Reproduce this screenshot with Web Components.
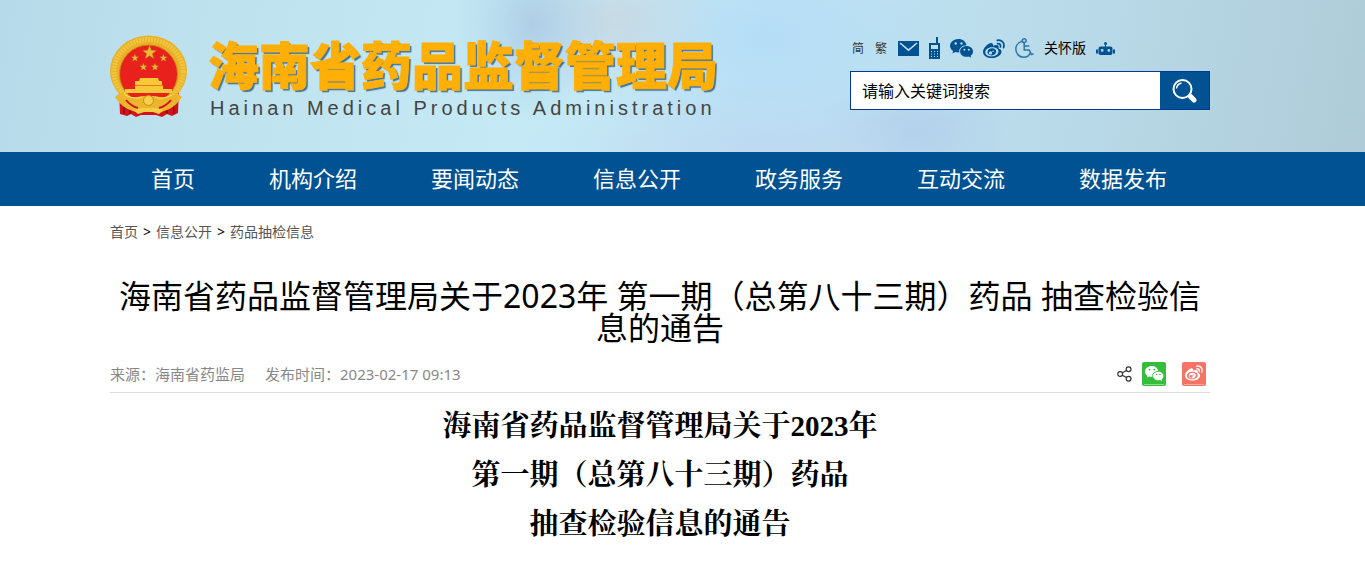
<!DOCTYPE html>
<html lang="zh-CN">
<head>
<meta charset="utf-8">
<meta name="viewport" content="width=device-width, initial-scale=1">
<title>海南省药品监督管理局</title>
<style>
  body {
    margin: 0;
    background: #fff;
    color: #000;
    font-family: "Noto Sans", "Noto Sans CJK SC", sans-serif;
    font-size: 14px;
    --blue: #005293;
    --left: 110px;
    --right: 155px;
  }
</style>
</head>
<body>
<hmpa-header>
  <hmpa-brand slot="brand" en="Hainan Medical Products Administration">海南省药品监督管理局</hmpa-brand>
  <hmpa-tools slot="tools"></hmpa-tools>
  <hmpa-search slot="tools" hint="请输入关键词搜索"></hmpa-search>
</hmpa-header>
<hmpa-nav items="首页,机构介绍,要闻动态,信息公开,政务服务,互动交流,数据发布"></hmpa-nav>
<hmpa-crumbs items="首页,信息公开,药品抽检信息"></hmpa-crumbs>
<hmpa-article>
  <span slot="title">海南省药品监督管理局关于2023年 第一期（总第八十三期）药品 抽查检验信息的通告</span>
  <span slot="source">来源：海南省药监局</span>
  <span slot="date">发布时间：2023-02-17 09:13</span>
  <hmpa-share slot="share"></hmpa-share>
  <div>海南省药品监督管理局关于2023年</div>
  <div>第一期（总第八十三期）药品</div>
  <div>抽查检验信息的通告</div>
</hmpa-article>

<script>
// two chat bubbles with the eyes left out
const WECHAT = `
  <path fill-rule="evenodd" d="M8.6 0C3.8 0 0 3 0 6.800c0 2.200 1.200 4 3.200 5.300L2.400 14.500l3-1.500c1 .3 2 .5 3.200.5h.7c-.8-4 2.600-7.300 7.200-7.300C15.900 2.600 12.600 0 8.600 0zM5.700 3.300a1.200 1.200 0 1 1 0 2.400 1.200 1.200 0 0 1 0-2.400zm5.800 0a1.200 1.200 0 1 1 0 2.400 1.200 1.200 0 0 1 0-2.400z"/>
  <path fill-rule="evenodd" d="M16.600 7.100c-3.700 0-6.500 2.400-6.500 5.300s2.800 5.300 6.500 5.300c.8 0 1.500-.1 2.200-.3l2.400 1.300-.6-2c1.500-1 2.400-2.600 2.400-4.300 0-2.900-2.800-5.300-6.400-5.300zM14.400 9.700a1 1 0 1 1 0 2 1 1 0 0 1 0-2zm4.400 0a1 1 0 1 1 0 2 1 1 0 0 1 0-2z"/>`;

const WEIBO = `
  <path fill-rule="evenodd" d="M8.900 4.200C6.500 3 0 8.600 0 12.900 0 16.600 4.200 19 8.800 19c5.700 0 9.700-3.200 9.700-6.300 0-1.800-1.400-2.900-3-3.300.7-2-.1-3.500-2.300-3.300-1 .1-2.100.4-3.100.9.300-1.300 0-2.300-1.200-2.800zM9 8.200c4 0 6.500 1.800 6.500 4.400S12.600 17.400 8.700 17.400s-6.400-1.700-6.400-4.200S5 8.200 9 8.200z"/>
  <path fill-rule="evenodd" d="M9.200 9.300c-2.700 0-4.700 1.700-4.700 3.800s1.700 3.300 4 3.300c2.800 0 4.700-1.800 4.700-3.800s-1.600-3.300-4-3.300zM7.500 12.200a1.700 1.700 0 1 1 0 3.400 1.700 1.700 0 0 1 0-3.400zm2.600-.8a.8.8 0 1 1 0 1.600.8.8 0 0 1 0-1.600z"/>
  <path fill="none" stroke="currentColor" stroke-width="1.700" stroke-linecap="round" d="M14.500 4.700c2.300-.3 3.500 1.100 2.900 3.200M14.300 1.300c4.700-.7 7.700 2.900 6.300 7.400"/>`;

const ICONS = {
  mail: [21, 15, `
    <path d="M0 0h21v15H0z"/>
    <path fill="none" stroke="#c3dfee" stroke-width="1.600" d="M2 2l8.500 7.200L19 2"/>`],
  phone: [11, 22, `
    <path fill-rule="evenodd" d="M7 0h2v6h2v16H0V6h7zM2 8v4h7V8zM2 14v1h1v-1zm3 0v1h1v-1zm3 0v1h1v-1zM2 16.500v1h1v-1zm3 0v1h1v-1zm3 0v1h1v-1zM2 19v1h1v-1zm3 0v1h1v-1zm3 0v1h1v-1z"/>`],
  wechat: [23, 19, WECHAT],
  weibo: [22, 19, WEIBO],
  wheelchair: [19, 20, `
    <g fill="none" stroke="currentColor" stroke-width="1.500" opacity=".75">
      <circle cx="9.200" cy="2.700" r="1.900"/>
      <path d="M9.200 4.800v7.200h5l2.300 4.600 2-.9M9.500 8h4.800"/>
      <path d="M7 3.300C2.500 4.600.8 8.400.8 11c0 4.700 3.500 8.200 7.700 8.200 3.300 0 6-1.700 7-4.800"/>
    </g>`],
  robot: [19, 13, `
    <circle cx="9.500" cy="1.500" r="1.500"/>
    <path d="M9 2h1v3H9zM0 7.500h2v4H0zM17 7.500h2v4h-2z"/>
    <path fill-rule="evenodd" d="M4.500 4.500h10a2 2 0 0 1 2 2v4.500a2 2 0 0 1-2 2h-10a2 2 0 0 1-2-2V6.500a2 2 0 0 1 2-2zM6.200 7a1.400 1.400 0 1 0 0 2.800 1.400 1.400 0 0 0 0-2.800zm6.600 0a1.400 1.400 0 1 0 0 2.800 1.400 1.400 0 0 0 0-2.800z"/>`],
  search: [26, 24, `
    <g fill="none" stroke="currentColor">
      <circle cx="10.500" cy="10" r="9" stroke-width="2"/>
      <path stroke-width="1.500" d="M4.500 9.500c.3-3 2.200-5 5-5.600"/>
      <path stroke-width="5" stroke-linecap="round" d="M18.500 17.500l3.500 3.500"/>
    </g>`],
  share: [15, 16, `
    <g fill="none" stroke="currentColor" stroke-width="1.200">
      <circle cx="3.200" cy="8" r="2.400"/><circle cx="11.600" cy="3.200" r="2.400"/><circle cx="11.600" cy="12.800" r="2.400"/>
      <path d="M5.300 6.800l4.200-2.400M5.300 9.200l4.200 2.400"/>
    </g>`],
  'wechat-tile': [24, 24, `
    <rect width="24" height="24" rx="2" fill="#36bd3c"/>
    <g fill="#fff" transform="translate(3 4) scale(.8)">${WECHAT}</g>
    <path d="M2 22h20v1H2z" fill="#8ddc90"/>`],
  'weibo-tile': [24, 24, `
    <rect width="24" height="24" rx="2" fill="#f57367"/>
    <g fill="#fff" color="#fff" transform="translate(3 3) scale(.82)">${WEIBO}</g>
    <path d="M2 22h20v1H2z" fill="#f9aaa2"/>`]
};

class HmpaIcon extends HTMLElement {
  constructor() {
    super();
    this.attachShadow({mode: 'open'});
  }
  connectedCallback() {
    const [w, h, body] = ICONS[this.getAttribute('name')];
    this.shadowRoot.innerHTML = `
      <style>
        :host { display: block; flex: none; }
        svg { display: block; }
      </style>
      <svg width="${w}" height="${h}" viewBox="0 0 ${w} ${h}" fill="currentColor" aria-hidden="true">${body}</svg>
    `;
  }
}

class HmpaHeader extends HTMLElement {
  constructor() {
    super();
    this.attachShadow({mode: 'open'}).innerHTML = `
      <style>
        :host {
          display: flex;
          justify-content: space-between;
          align-items: flex-start;
          box-sizing: border-box;
          min-height: 152px;
          padding: 35px var(--right) 32px var(--left);
          background:
            radial-gradient(ellipse 80px 100px at 39% 16%, rgba(165, 196, 226, .7), rgba(165, 196, 226, .3) 50%, rgba(165, 196, 226, 0)),
            radial-gradient(ellipse 110px 80px at 45% 14%, rgba(200, 214, 224, .8), rgba(200, 214, 224, .3) 60%, rgba(200, 214, 224, 0)),
            radial-gradient(ellipse 180px 130px at 56% 25%, rgba(178, 219, 247, .8), rgba(178, 219, 247, .3) 60%, rgba(178, 219, 247, 0)),
            radial-gradient(ellipse 260px 80px at 56% 100%, rgba(190, 214, 240, .8), rgba(190, 214, 240, .3) 60%, rgba(190, 214, 240, 0)),
            radial-gradient(ellipse 100px 70px at 67% 88%, rgba(172, 204, 233, .8), rgba(172, 204, 233, .3) 60%, rgba(172, 204, 233, 0)),
            linear-gradient(100deg, #b7daea 0%, #c0e4ef 20%, #c5ebf6 42%, #bfe3f3 60%, #b8d9e7 80%, #afcbd8 100%);
        }
        .tools {
          display: flex;
          flex-direction: column;
          width: 360px;
        }
      </style>
      <slot name="brand"></slot>
      <div class="tools"><slot name="tools"></slot></div>
    `;
  }
}

class HmpaBrand extends HTMLElement {
  constructor() {
    super();
    this.attachShadow({mode: 'open'}).innerHTML = `
      <style>
        :host { display: flex; gap: 20px; }
        svg { flex: none; display: block; }
        h1 {
          margin: 4px 0 0;
          font-family: "Liberation Sans", "Noto Sans CJK SC", sans-serif;
          font-size: 51px;
          line-height: 58px;
          font-weight: 900;
          color: #ffaf05;
          -webkit-text-stroke: 1px #ffaf05;
          text-shadow: 2px 2px 1px #44749a;
          white-space: nowrap;
        }
        p {
          margin: 0 0 0 2px;
          font-family: "Liberation Sans", sans-serif;
          font-size: 20px;
          line-height: 22px;
          letter-spacing: 4px;
          color: #444;
          white-space: nowrap;
        }
      </style>
      <svg width="78" height="84" viewBox="0 0 78 84" aria-hidden="true">
        <path d="M9 56L10 79l7 2 4-2 5 3 5-2h15l6 2 5-3 5 2 6-3 1-23z" fill="#d3131a"/>
        <path d="M15 66l-1 13M20 69v10M57 69v10M63 66l1 13" stroke="#8f0c12" stroke-width="1.500"/>
        <ellipse cx="38.500" cy="36" rx="38.500" ry="35.500" fill="#e9b127"/>
        <ellipse cx="38.500" cy="36.500" rx="34.500" ry="32" fill="none" stroke="#f0c63e" stroke-width="5" stroke-dasharray="2 1"/>
        <circle cx="38.500" cy="39" r="29" fill="#e8211d" stroke="#c98b15"/>
        <g fill="#e9b93a" stroke="#b8801c" stroke-width=".4">
          <path id="star" d="M39.500 10.500l1.800 4.800 5 .2-4 3.200 1.400 4.900-4.200-2.900-4.200 2.900 1.400-4.900-4-3.200 5-.2z"/>
          <use href="#star" transform="translate(3.200 13.300) scale(.55)"/>
          <use href="#star" transform="translate(31.700 13.300) scale(.55)"/>
          <use href="#star" transform="translate(11.700 22.300) scale(.55)"/>
          <use href="#star" transform="translate(23.200 22.300) scale(.55)"/>
        </g>
        <path d="M30 43h18l1 3h3v4H25v-4h4zM25 51h28v3h9v4H15v-4h10z" fill="#f8c839"/>
        <path d="M25 50.500h28" stroke="#d8801c"/>
        <path d="M10 58c6 4 12 5 17 4l6-1h11l6 1c5 1 11 0 17-4l5 4c-5 8-13 14-23 15l-6-3-4.500 2-4.500-2-6 3C18 76 10 70 5 62z" fill="#edb52b"/>
        <path d="M16 65c4 5 8 7 12 8M61 65c-4 5-8 7-12 8" fill="none" stroke="#d3131a" stroke-width="2"/>
        <path d="M15 60c6 3 12 4 17 2M62 60c-6 3-12 4-17 2" fill="none" stroke="#ffe06d"/>
        <circle cx="38.500" cy="65.500" r="5" fill="#f8ce4a" stroke="#c98b15"/>
        <path d="M31 73h15l8 2-5 4-6-2h-9l-6 2-5-4z" fill="#f6cd48"/>
      </svg>
      <div>
        <h1><slot></slot></h1>
        <p></p>
      </div>
    `;
  }
  connectedCallback() {
    this.shadowRoot.querySelector('p').textContent = this.getAttribute('en');
  }
}

class HmpaTools extends HTMLElement {
  constructor() {
    super();
    this.attachShadow({mode: 'open'}).innerHTML = `
      <style>
        :host {
          display: flex;
          align-items: center;
          gap: 10px;
          height: 26px;
          padding: 0 2px;
        }
        a { color: var(--blue); text-decoration: none; }
        .lang { padding-right: 1px; font-size: 12px; color: #333; }
        .care { font-size: 14px; line-height: 20px; color: #000; }
      </style>
      <a class="lang" href="#">简</a>
      <a class="lang" href="#">繁</a>
      <a href="#" aria-label="邮箱"><hmpa-icon name="mail"></hmpa-icon></a>
      <a href="#" aria-label="手机版"><hmpa-icon name="phone"></hmpa-icon></a>
      <a href="#" aria-label="微信"><hmpa-icon name="wechat"></hmpa-icon></a>
      <a href="#" aria-label="微博"><hmpa-icon name="weibo"></hmpa-icon></a>
      <a href="#" aria-label="无障碍"><hmpa-icon name="wheelchair"></hmpa-icon></a>
      <a class="care" href="#">关怀版</a>
      <a href="#" aria-label="智能问答"><hmpa-icon name="robot"></hmpa-icon></a>
    `;
  }
}

class HmpaSearch extends HTMLElement {
  constructor() {
    super();
    this.attachShadow({mode: 'open'}).innerHTML = `
      <style>
        :host { display: block; margin-top: 10px; }
        form {
          display: flex;
          height: 37px;
          border: 1px solid #003894;
        }
        input {
          flex: 1;
          min-width: 0;
          padding: 0 11px;
          border: 0;
          outline: 0;
          background: #fff;
          font: 16px "Noto Sans", "Noto Sans CJK SC", sans-serif;
        }
        input::placeholder { color: #000; opacity: 1; }
        button {
          display: grid;
          place-items: center;
          width: 49px;
          padding: 0;
          border: 0;
          background: var(--blue);
          color: #fff;
        }
      </style>
      <form>
        <input type="text">
        <button type="button" aria-label="搜索"><hmpa-icon name="search"></hmpa-icon></button>
      </form>
    `;
  }
  connectedCallback() {
    const input = this.shadowRoot.querySelector('input');
    input.placeholder = this.getAttribute('hint');
    input.setAttribute('aria-label', this.getAttribute('hint'));
  }
}

class HmpaNav extends HTMLElement {
  constructor() {
    super();
    this.attachShadow({mode: 'open'});
  }
  connectedCallback() {
    const items = this.getAttribute('items').split(',');
    this.shadowRoot.innerHTML = `
      <style>
        :host { display: block; background: var(--blue); }
        nav {
          display: flex;
          gap: 74px;
          margin: 0 var(--right) 0 var(--left);
          padding: 0 41px 2px;
        }
        a {
          font-size: 22px;
          line-height: 52px;
          color: #fff;
          text-decoration: none;
          white-space: nowrap;
        }
      </style>
      <nav>${items.map(item => `<a href="#">${item}</a>`).join('')}</nav>
    `;
  }
}

class HmpaCrumbs extends HTMLElement {
  constructor() {
    super();
    this.attachShadow({mode: 'open'});
  }
  connectedCallback() {
    const items = this.getAttribute('items').split(',');
    this.shadowRoot.innerHTML = `
      <style>
        :host {
          display: block;
          margin: 16px var(--right) 0 var(--left);
        }
        nav {
          display: flex;
          gap: 5px;
          font-size: 14px;
          line-height: 20px;
        }
        a { color: #555; text-decoration: none; }
      </style>
      <nav>${items.map(item => `<a href="#">${item}</a>`).join('<span>&gt;</span>')}</nav>
    `;
  }
}

class HmpaShare extends HTMLElement {
  constructor() {
    super();
    this.attachShadow({mode: 'open'}).innerHTML = `
      <style>
        :host { display: flex; align-items: center; gap: 16px; padding-right: 4px; }
        div { display: flex; align-items: center; gap: 10px; color: #333; }
      </style>
      <div>
        <hmpa-icon name="share"></hmpa-icon>
        <a href="#" aria-label="分享到微信"><hmpa-icon name="wechat-tile"></hmpa-icon></a>
      </div>
      <a href="#" aria-label="分享到微博"><hmpa-icon name="weibo-tile"></hmpa-icon></a>
    `;
  }
}

class HmpaArticle extends HTMLElement {
  constructor() {
    super();
    this.attachShadow({mode: 'open'}).innerHTML = `
      <style>
        :host {
          display: block;
          margin: 38px var(--right) 0 var(--left);
        }
        h2 {
          margin: 0;
          font-size: 32px;
          line-height: 32px;
          font-weight: 400;
          text-align: center;
        }
        .meta {
          display: flex;
          align-items: center;
          gap: 20px;
          margin-top: 18px;
          padding-bottom: 6px;
          border-bottom: 1px solid #ddd;
          font-size: 15px;
          line-height: 24px;
          color: #888;
        }
        .share { margin-left: auto; }
        .body {
          margin-top: 9px;
          font-family: "Liberation Serif", "Noto Serif CJK SC", "Noto Sans CJK SC", serif;
          font-size: 29px;
          line-height: 49px;
          font-weight: 700;
          text-align: center;
        }
      </style>
      <h2><slot name="title"></slot></h2>
      <div class="meta">
        <slot name="source"></slot>
        <slot name="date"></slot>
        <div class="share"><slot name="share"></slot></div>
      </div>
      <div class="body"><slot></slot></div>
    `;
  }
}

customElements.define('hmpa-icon', HmpaIcon);
customElements.define('hmpa-header', HmpaHeader);
customElements.define('hmpa-brand', HmpaBrand);
customElements.define('hmpa-tools', HmpaTools);
customElements.define('hmpa-search', HmpaSearch);
customElements.define('hmpa-nav', HmpaNav);
customElements.define('hmpa-crumbs', HmpaCrumbs);
customElements.define('hmpa-share', HmpaShare);
customElements.define('hmpa-article', HmpaArticle);
</script>
</body>
</html>
